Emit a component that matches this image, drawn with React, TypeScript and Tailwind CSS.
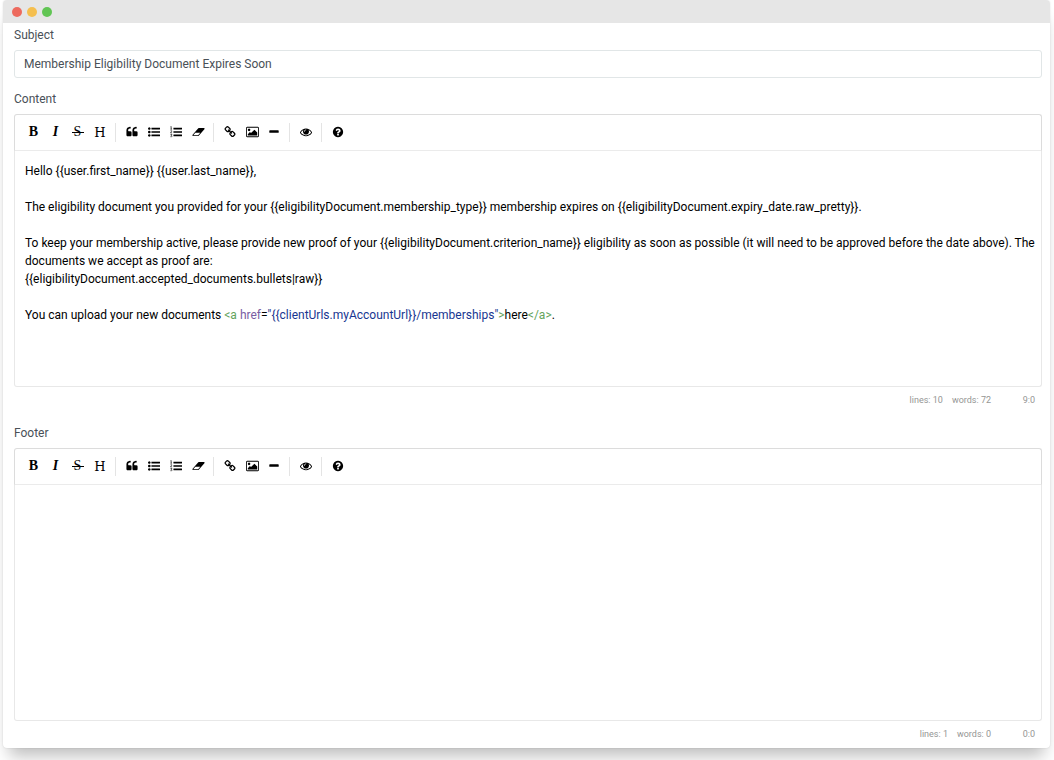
import { ReactNode } from 'react';

interface IconProps {
  d:        string;
  viewBox?: string;
  wide?:    boolean;
}

function Icon({ d, viewBox = '0 0 1792 1792', wide }: IconProps) {
  return (
    <svg viewBox={viewBox} className={wide ? 'h-3 w-[13px]' : 'size-3'} fill="currentColor" aria-hidden="true">
      <path d={d} />
    </svg>
  );
}

const QUOTE = 'M832 960v384q0 80-56 136t-136 56h-384q-80 0-136-56t-56-136v-704q0-104 40.5-198.5t109.5-163.5 163.5-109.5 198.5-40.5h64q26 0 45 19t19 45v128q0 26-19 45t-45 19h-64q-106 0-181 75t-75 181v32q0 40 28 68t68 28h224q80 0 136 56t56 136zm896 0v384q0 80-56 136t-136 56h-384q-80 0-136-56t-56-136v-704q0-104 40.5-198.5t109.5-163.5 163.5-109.5 198.5-40.5h64q26 0 45 19t19 45v128q0 26-19 45t-45 19h-64q-106 0-181 75t-75 181v32q0 40 28 68t68 28h224q80 0 136 56t56 136z';
const BULLETS = 'M384 1408q0 80-56 136t-136 56-136-56-56-136 56-136 136-56 136 56 56 136zm0-512q0 80-56 136t-136 56-136-56-56-136 56-136 136-56 136 56 56 136zm0-512q0 80-56 136t-136 56-136-56-56-136 56-136 136-56 136 56 56 136z';
const BARS = 'M1792 1312v192q0 13-9.5 22.5t-22.5 9.5h-1216q-13 0-22.5-9.5t-9.5-22.5v-192q0-13 9.5-22.5t22.5-9.5h1216q13 0 22.5 9.5t9.5 22.5zm0-512v192q0 13-9.5 22.5t-22.5 9.5h-1216q-13 0-22.5-9.5t-9.5-22.5v-192q0-13 9.5-22.5t22.5-9.5h1216q13 0 22.5 9.5t9.5 22.5zm0-512v192q0 13-9.5 22.5t-22.5 9.5h-1216q-13 0-22.5-9.5t-9.5-22.5v-192q0-13 9.5-22.5t22.5-9.5h1216q13 0 22.5 9.5t9.5 22.5z';
const ERASER = 'M960 1408l336-384h-768l-336 384h768zm1013-1077q15 34 9.5 71.5t-30.5 65.5l-896 1024q-38 44-96 44h-768q-38 0-69.5-20.5t-47.5-54.5q-15-34-9.5-71.5t30.5-65.5l896-1024q38-44 96-44h768q38 0 69.5 20.5t47.5 54.5z';
const LINK = 'M1520 1216q0-40-28-68l-208-208q-28-28-68-28-42 0-72 32 3 3 19 18.5t21.5 21.5 15 19 13 25.5 3.5 27.5q0 40-28 68t-68 28q-15 0-27.5-3.5t-25.5-13-19-15-21.5-21.5-18.5-19q-33 31-33 73 0 40 28 68l206 207q27 27 68 27 40 0 68-26l147-146q28-28 28-67zm-703-705q0-40-28-68l-206-207q-28-28-68-28-39 0-68 27l-147 146q-28 28-28 67 0 40 28 68l208 208q27 27 68 27 42 0 72-31-3-3-19-18.5t-21.5-21.5-15-19-13-25.5-3.5-27.5q0-40 28-68t68-28q15 0 27.5 3.5t25.5 13 19 15 21.5 21.5 18.5 19q33-31 33-73zm895 705q0 120-85 203l-147 146q-83 83-203 83-121 0-204-85l-206-207q-83-83-83-203 0-123 88-209l-88-88q-86 88-208 88-120 0-204-84l-208-208q-84-84-84-204t85-203l147-146q83-83 203-83 121 0 204 85l206 207q83 83 83 203 0 123-88 209l88 88q86-88 208-88 120 0 204 84l208 208q84 84 84 204z';
const PICTURE = 'M576 576q0 80-56 136t-136 56-136-56-56-136 56-136 136-56 136 56 56 136zm1024 384v448h-1408v-192l320-320 160 160 512-512zm96-704h-1600q-13 0-22.5 9.5t-9.5 22.5v1216q0 13 9.5 22.5t22.5 9.5h1600q13 0 22.5-9.5t9.5-22.5v-1216q0-13-9.5-22.5t-22.5-9.5zm160 32v1216q0 66-47 113t-113 47h-1600q-66 0-113-47t-47-113v-1216q0-66 47-113t113-47h1600q66 0 113 47t47 113z';
const MINUS = 'M1600 736v192q0 40-28 68t-68 28h-1216q-40 0-68-28t-28-68v-192q0-40 28-68t68-28h1216q40 0 68 28t28 68z';
const EYE = 'M1664 960q-152-236-381-353 61 104 61 225 0 185-131.5 316.5t-316.5 131.5-316.5-131.5-131.5-316.5q0-121 61-225-229 117-381 353 133 205 333.5 326.5t434.5 121.5 434.5-121.5 333.5-326.5zm-720-384q0-20-14-34t-34-14q-125 0-214.5 89.5t-89.5 214.5q0 20 14 34t34 14 34-14 14-34q0-86 61-147t147-61q20 0 34-14t14-34zm848 384q0 34-20 69-140 230-376.5 368.5t-499.5 138.5-499.5-139-376.5-368q-20-35-20-69t20-69q140-229 376.5-368t499.5-139 499.5 139 376.5 368q20 35 20 69z';
const HELP = 'M1024 1376v-192q0-14-9-23t-23-9h-192q-14 0-23 9t-9 23v192q0 14 9 23t23 9h192q14 0 23-9t9-23zm256-672q0-88-55.5-163t-138.5-116-170-41q-243 0-371 213-15 24 8 42l132 100q7 6 19 6 16 0 25-12 53-68 86-92 34-24 86-24 48 0 85.5 26t37.5 59q0 38-20 61t-68 45q-63 28-115.5 86.5t-52.5 125.5v36q0 14 9 23t23 9h192q14 0 23-9t9-23q0-19 21.5-49.5t54.5-49.5q32-18 49-28.5t46-35 44.5-48 28-60.5 12.5-81zm384 192q0 209-103 385.5t-279.5 279.5-385.5 103-385.5-103-279.5-279.5-103-385.5 103-385.5 279.5-279.5 385.5-103 385.5 103 279.5 279.5 103 385.5z';

function NumberedList() {
  return (
    <svg viewBox="0 0 1792 1792" className="size-3" fill="currentColor" aria-hidden="true">
      <path d={BARS} />
      <path
        d="M70 130l110-60v400M60 470h240M70 720q110-90 190 0 40 90-190 310h240M70 1270h220l-120 150q130 0 130 110-20 130-240 70"
        fill="none"
        stroke="currentColor"
        strokeWidth="95"
      />
    </svg>
  );
}

const letter = 'font-["Liberation_Serif",serif] text-sm leading-none pr-px';

// null = separator
const TOOLS: ({ title: string; icon: ReactNode } | null)[] = [
  { title: 'Bold',   icon: <span className={`${letter} font-bold`}>B</span> },
  { title: 'Italic', icon: <span className={`${letter} font-bold italic`}>I</span> },
  {
    title: 'Strikethrough',
    icon: (
      <span className={`${letter} relative`}>
        S
        <i className="absolute inset-x-[-2px] top-[7px] h-px bg-black" />
      </span>
    ),
  },
  { title: 'Heading', icon: <span className='font-["DejaVu_Serif",serif] text-[13px] leading-none'>H</span> },
  null,
  { title: 'Quote',         icon: <Icon d={QUOTE} /> },
  { title: 'Generic List',  icon: <Icon d={BULLETS + BARS} /> },
  { title: 'Numbered List', icon: <NumberedList /> },
  { title: 'Clean block',   icon: <Icon d={ERASER} viewBox="0 0 2048 1792" wide /> },
  null,
  { title: 'Create Link',            icon: <Icon d={LINK} /> },
  { title: 'Insert Image',           icon: <Icon d={PICTURE} viewBox="-64 0 1920 1792" wide /> },
  { title: 'Insert Horizontal Line', icon: <Icon d={MINUS} /> },
  null,
  { title: 'Toggle Preview', icon: <Icon d={EYE} /> },
  null,
  { title: 'Markdown Guide', icon: <Icon d={HELP} /> },
];

function Toolbar() {
  return (
    <div role="toolbar" className="flex h-[37px] items-center rounded-t-[3px] border border-[#dcdcdc] border-b-[#ebebeb] px-2 pb-px">
      {TOOLS.map((tool, i) =>
        tool ? (
          <button key={tool.title} type="button" title={tool.title} className="flex h-6 w-[22px] items-center justify-center text-black">
            {tool.icon}
          </button>
        ) : (
          <i key={i} className="mr-[5px] ml-1 h-[19px] w-px bg-[#e4e4e4]" />
        )
      )}
    </div>
  );
}

interface EditorProps {
  id:        string;
  label:     string;
  lines:     number;
  words:     number;
  cursor:    string;
  children?: ReactNode;
}

function Editor({ id, label, lines, words, cursor, children }: EditorProps) {
  return (
    <section>
      <h2 id={id} className="mb-[3px] text-xs leading-6 text-[#495057]">{label}</h2>
      <Toolbar />
      <div
        role="textbox"
        aria-multiline="true"
        aria-labelledby={id}
        contentEditable
        suppressContentEditableWarning
        spellCheck={false}
        className="min-h-[236px] rounded-b-[3px] border border-t-0 border-[#e8e8e8] pt-[11px] pr-1 pl-2.5 text-xs leading-[18px] whitespace-pre-wrap text-black outline-none"
      >
        {children}
      </div>
      <div className="flex justify-end pr-[7px] text-[9px] leading-[26px] text-[#959694]">
        <span>lines: {lines}</span>
        <span className="ml-[9px]">words: {words}</span>
        <span className="min-w-11 text-right">{cursor}</span>
      </div>
    </section>
  );
}

export default function App() {
  return (
    <div className="overflow-hidden bg-white pr-1 pb-3 pl-[3px] font-[Roboto,sans-serif]">
      <div className="rounded-[4px] bg-white shadow-[0_0_2px_rgba(0,0,0,0.12),0_14px_16px_-6px_rgba(0,0,0,0.26)]">

        {/* Title bar */}
        <div className="flex h-[23px] items-center gap-[5px] rounded-t-[4px] bg-[#e6e6e6] pl-[9px]">
          <span className="size-2.5 rounded-full bg-[#ed6a5e]" />
          <span className="size-2.5 rounded-full bg-[#f5bf4f]" />
          <span className="size-2.5 rounded-full bg-[#61c554]" />
        </div>

        <form className="flex flex-col pr-2 pb-px pl-[11px]">
          <label htmlFor="subject" className="mb-[3px] text-xs leading-6 text-[#495057]">Subject</label>
          <input
            id="subject"
            type="text"
            defaultValue="Membership Eligibility Document Expires Soon"
            className="mb-[9px] h-7 w-full rounded-[3px] border border-[#e1e6e7] px-[9px] text-xs text-[#495057] outline-none"
          />

          <div className="flex flex-col gap-2">
            <Editor id="content" label="Content" lines={10} words={72} cursor="9:0">
              <p>{'Hello {{user.first_name}} {{user.last_name}},'}</p>
              <br />
              <p>{'The eligibility document you provided for your {{eligibilityDocument.membership_type}} membership expires on {{eligibilityDocument.expiry_date.raw_pretty}}.'}</p>
              <br />
              <p>{'To keep your membership active, please provide new proof of your {{eligibilityDocument.criterion_name}} eligibility as soon as possible (it will need to be approved before the date above). The documents we accept as proof are:'}</p>
              <p>{'{{eligibilityDocument.accepted_documents.bullets|raw}}'}</p>
              <br />
              <p>
                {'You can upload your new documents '}
                <span className="text-[#63a35c]">{'<a'}</span>{' '}
                <span className="text-[#795da3]">href</span>=
                <span className="text-[#183691]">{'"{{clientUrls.myAccountUrl}}/memberships"'}</span>
                <span className="text-[#63a35c]">{'>'}</span>here
                <span className="text-[#63a35c]">{'</a>'}</span>.
              </p>
            </Editor>

            <Editor id="footer" label="Footer" lines={1} words={0} cursor="0:0" />
          </div>
        </form>
      </div>
    </div>
  );
}
